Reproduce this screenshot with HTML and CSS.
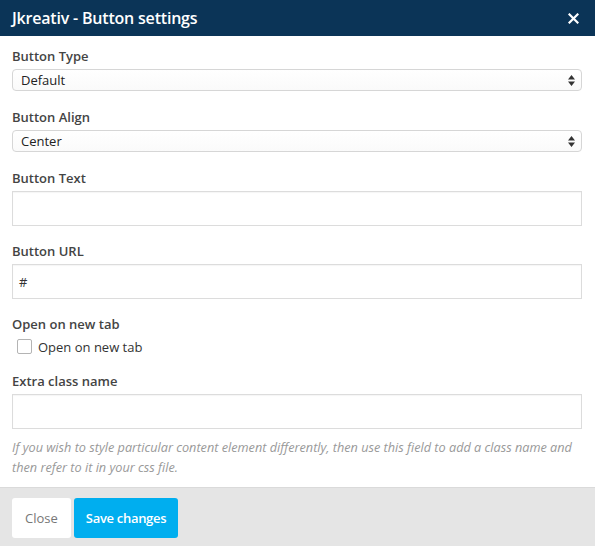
FILE: index.html
```html
<!DOCTYPE html>
<html>
<head>
<meta charset="utf-8">
<link rel="stylesheet" href="styles.css">
</head>
<body>
<div class="modal">
  <div class="modal-header">
    <h1 class="modal-title">Jkreativ - Button settings</h1>
    <svg class="close-icon" width="11" height="11" viewBox="0 0 11 11"><path d="M1.5 1.5 L9.5 9.5 M9.5 1.5 L1.5 9.5" stroke="#fff" stroke-width="2.2" stroke-linecap="square"/></svg>
  </div>
  <div class="modal-body">
    <div class="group group-select">
      <label class="label">Button Type</label>
      <div class="select">
        <span>Default</span>
        <svg class="arrows" width="7" height="11" viewBox="0 0 7 11"><path d="M3.5 0 L7 4.5 H0 Z M3.5 11 L0 6.5 H7 Z" fill="#333"/></svg>
      </div>
    </div>
    <div class="group group-select">
      <label class="label">Button Align</label>
      <div class="select">
        <span>Center</span>
        <svg class="arrows" width="7" height="11" viewBox="0 0 7 11"><path d="M3.5 0 L7 4.5 H0 Z M3.5 11 L0 6.5 H7 Z" fill="#333"/></svg>
      </div>
    </div>
    <div class="group">
      <label class="label">Button Text</label>
      <div class="input"></div>
    </div>
    <div class="group">
      <label class="label">Button URL</label>
      <div class="input">#</div>
    </div>
    <div class="group">
      <label class="label">Open on new tab</label>
      <div class="check-row">
        <span class="checkbox"></span>
        <span class="check-text">Open on new tab</span>
      </div>
    </div>
    <div class="group last">
      <label class="label">Extra class name</label>
      <div class="input"></div>
      <p class="help">If you wish to style particular content element differently, then use this field to add a class name and then refer to it in your css file.</p>
    </div>
  </div>
  <div class="modal-footer">
    <button class="btn btn-close">Close</button>
    <button class="btn btn-save">Save changes</button>
  </div>
</div>
</body>
</html>
```

FILE: styles.css
```css
html, body {
  margin: 0;
  padding: 0;
  background: #fff;
}
body {
  font-family: "Open Sans", "Liberation Sans", sans-serif;
  color: #333;
  width: 595px;
  height: 546px;
  overflow: hidden;
}
.modal {
  display: flex;
  flex-direction: column;
  height: 546px;
}
.modal-header {
  background: #0b3457;
  height: 36px;
  display: flex;
  align-items: center;
  justify-content: space-between;
  padding: 0 16px 0 12px;
  flex: none;
}
.modal-title {
  margin: 0;
  color: #fff;
  font-size: 16px;
  font-weight: 600;
  letter-spacing: -0.2px;
}
.close-icon {
  display: block;
}
.modal-body {
  flex: 1;
  padding: 11px 13px 0 12px;
}
.group {
  margin-bottom: 16px;
}
.group.group-select {
  margin-bottom: 17px;
}
.group.last {
  margin-bottom: 0;
}
.label {
  display: block;
  font-size: 13px;
  font-weight: 600;
  line-height: 18px;
  color: #444;
  margin-bottom: 4px;
}
.select {
  height: 22px;
  box-sizing: border-box;
  border: 1px solid #d6d6d6;
  border-radius: 4px;
  background: linear-gradient(#fff, #fafafa);
  display: flex;
  align-items: center;
  justify-content: space-between;
  padding: 0 6px 0 8px;
  font-size: 13px;
  color: #222;
}
.arrows {
  display: block;
}
.input {
  height: 35px;
  box-sizing: border-box;
  border: 1px solid #dcdcdc;
  box-shadow: inset 0 1px 1px rgba(0,0,0,0.04);
  background: #fff;
  display: flex;
  align-items: center;
  padding: 0 6px;
  font-size: 13px;
  color: #333;
}
.check-row {
  display: flex;
  align-items: center;
  padding: 0 0 0 5px;
  height: 19px;
}
.checkbox {
  width: 15px;
  height: 15px;
  box-sizing: border-box;
  border: 1px solid #b4b4b4;
  border-radius: 2px;
  background: #fff;
  margin-right: 6px;
}
.check-text {
  font-size: 13px;
  color: #333;
}
.help {
  margin: 8px 0 0;
  font-size: 12.7px;
  font-style: italic;
  line-height: 20px;
  color: #999;
}
.modal-footer {
  background: #e5e5e5;
  border-top: 1px solid #dadada;
  height: 59px;
  box-sizing: border-box;
  display: flex;
  align-items: flex-start;
  gap: 3px;
  padding: 10px 12px 0;
  flex: none;
}
.btn {
  height: 40px;
  border: none;
  border-radius: 3px;
  font-family: "Open Sans", "Liberation Sans", sans-serif;
  font-size: 13px;
  padding: 0 13px;
  cursor: pointer;
}
.btn-close {
  background: #fff;
  color: #777;
}
.btn-save {
  background: #00aeef;
  color: #fff;
  font-weight: 600;
  padding: 0 12px;
  letter-spacing: -0.3px;
}
```
